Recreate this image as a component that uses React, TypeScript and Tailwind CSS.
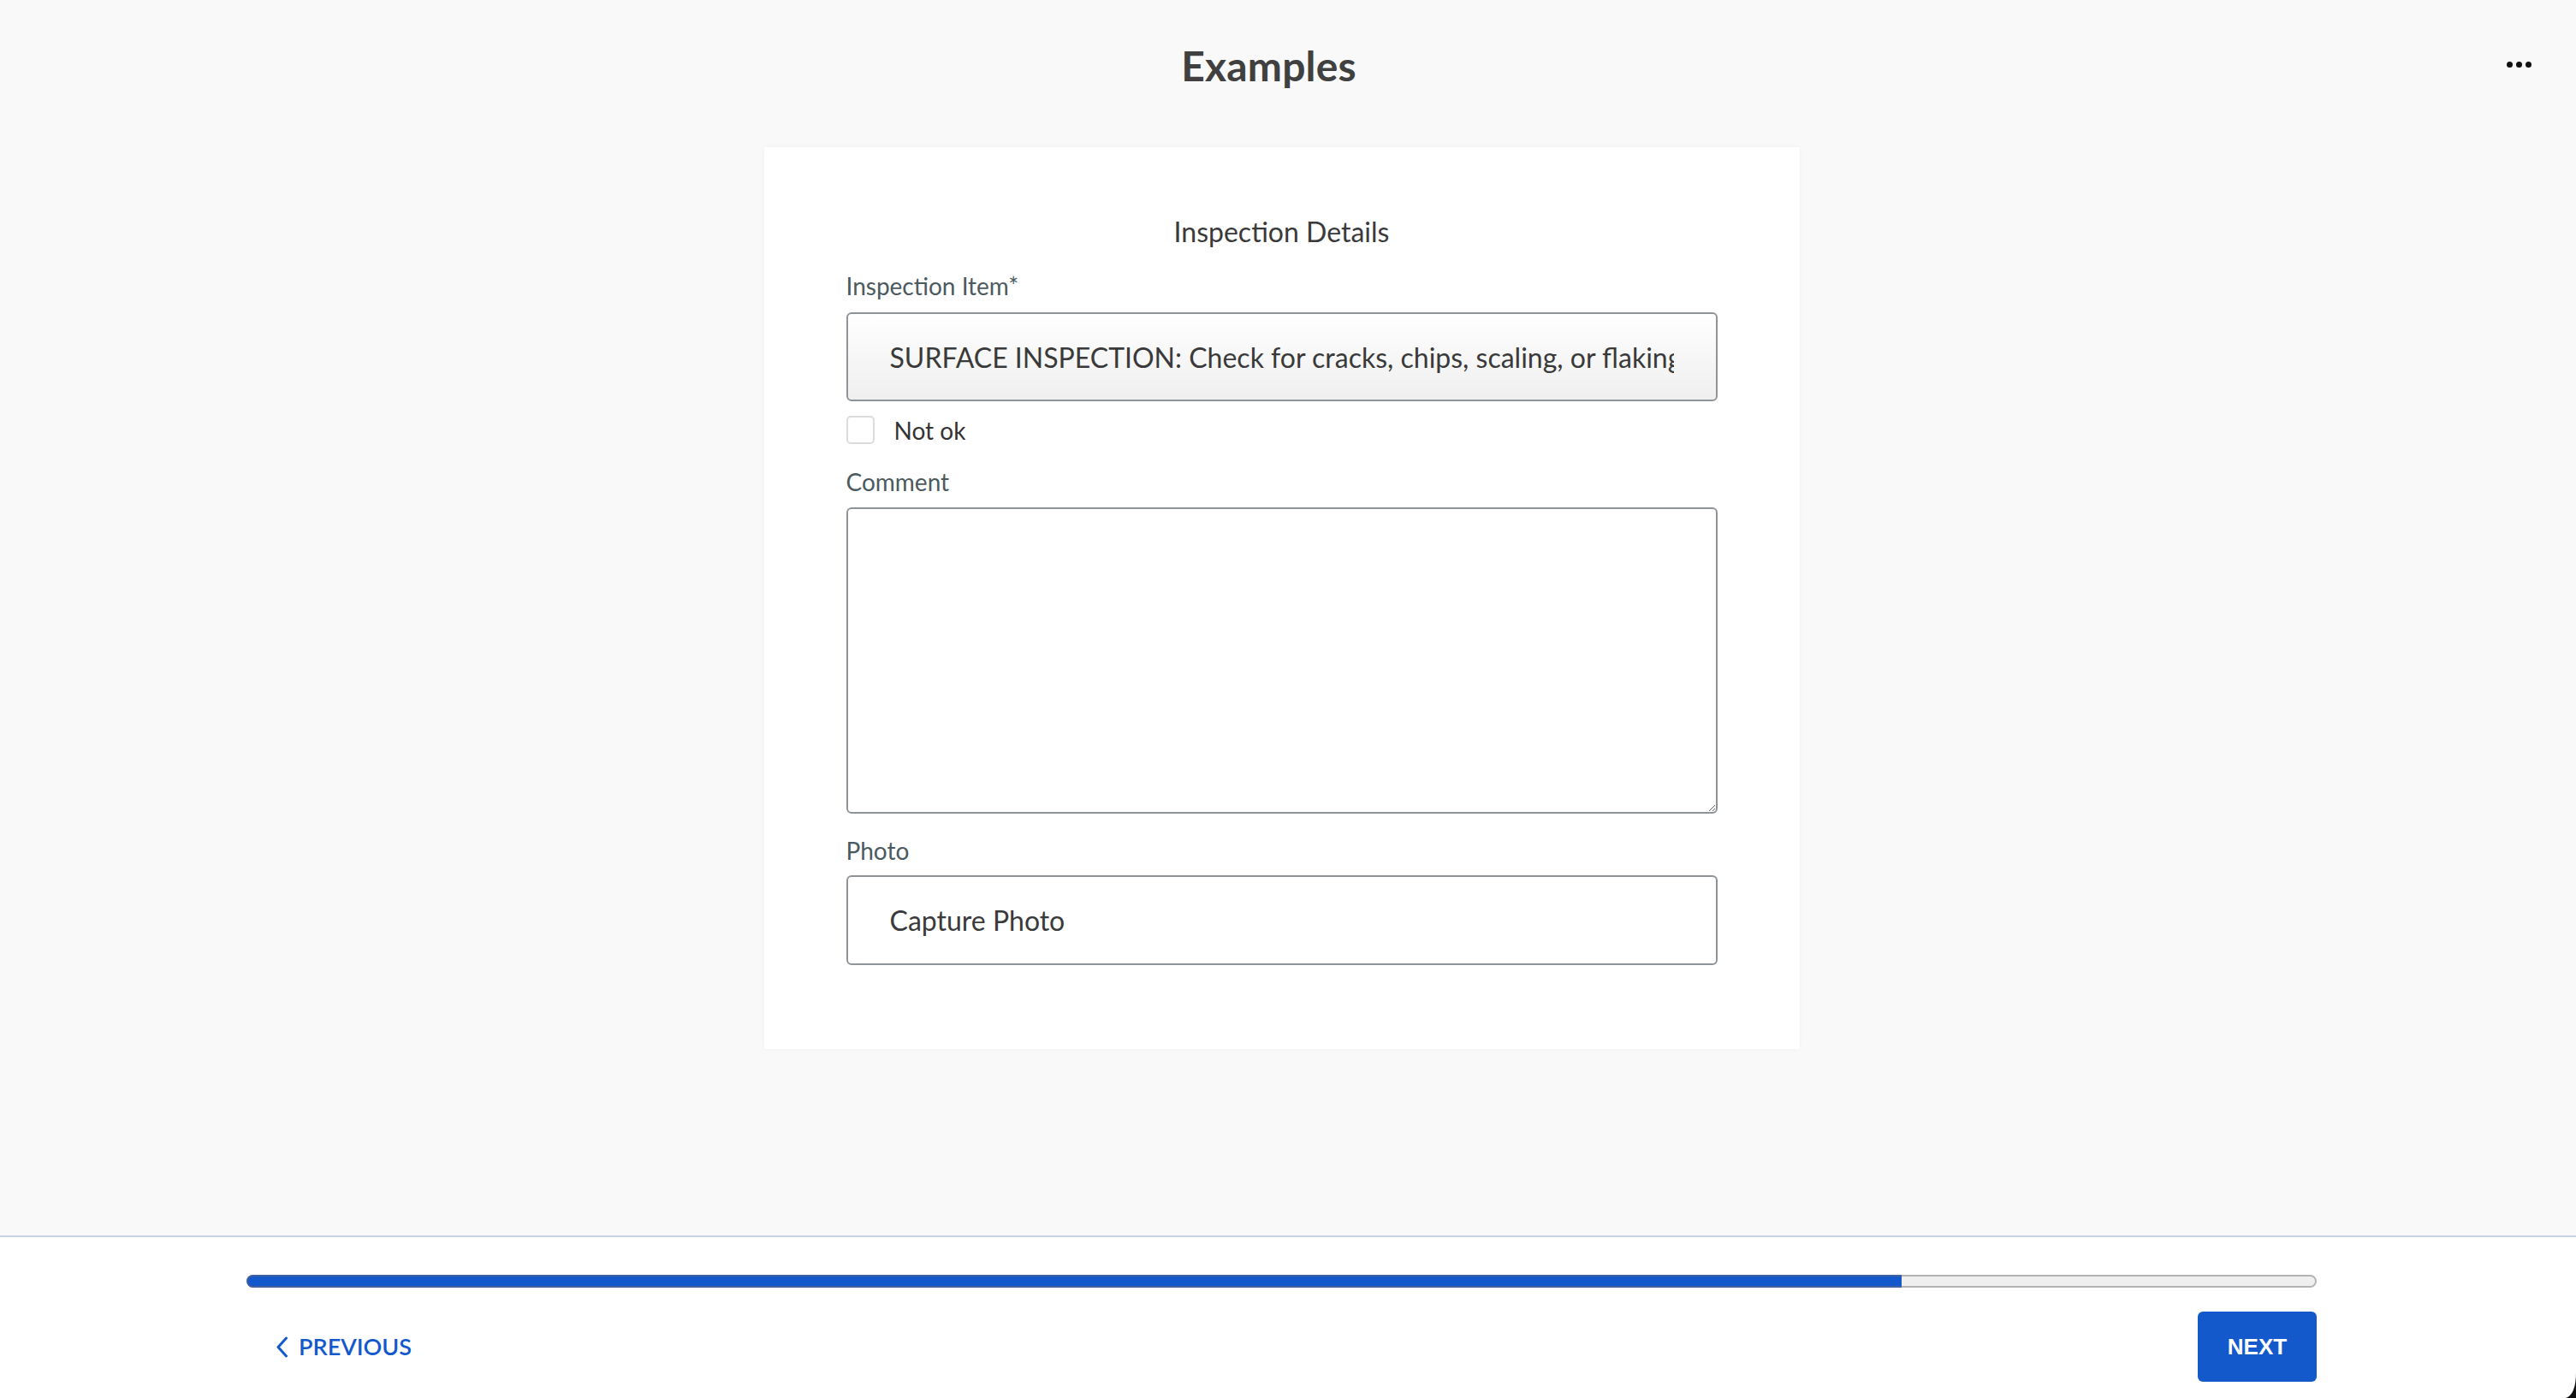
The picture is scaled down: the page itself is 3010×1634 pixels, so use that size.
import { useState } from 'react'

const font = { fontFamily: 'Lato, "Open Sans", sans-serif' }

function FieldLabel({ children }: { children: React.ReactNode }) {
  return <div className="h-8 text-[28px] leading-8 text-[#4b5a5f]">{children}</div>
}

export default function App() {
  const [notOk, setNotOk] = useState(false)
  const [comment, setComment] = useState('')
  const progress = 80

  return (
    <div className="relative flex h-[1634px] w-[3010px] flex-col overflow-hidden bg-[#f9f9f9] text-[#3a3a3a]" style={font}>
      {/* Header */}
      <div className="relative flex h-[172px] shrink-0 pr-[15px]">
        <div className="flex h-[154px] flex-1 items-center justify-center pr-[30px]">
          <h1 className="text-[48px] font-bold tracking-[0.2px] text-[#404040]">Examples</h1>
        </div>
        <button className="absolute right-[50px] top-[64px] flex h-[22px] items-center gap-[4px] px-[2px]" title="More">
          <span className="h-[7px] w-[7px] rounded-full bg-[#111]" />
          <span className="h-[7px] w-[7px] rounded-full bg-[#111]" />
          <span className="h-[7px] w-[7px] rounded-full bg-[#111]" />
        </button>
      </div>

      {/* Content */}
      <div className="flex flex-1 justify-center pr-[15px]">
        <div className="h-fit w-[1210px] bg-white px-[96px] pb-[98px] pt-[81px] shadow-[0_0_6px_rgba(0,0,0,0.04)]">
          <h2 className="h-9 text-center text-[32px] leading-9 text-[#3a3a3a]">Inspection Details</h2>

          <div className="mt-[29px]">
            <FieldLabel>Inspection Item*</FieldLabel>
            <input
              readOnly
              value="SURFACE INSPECTION: Check for cracks, chips, scaling, or flaking"
              className="mt-[15px] block h-[104px] w-full rounded-[6px] border-2 border-[#8f9499] bg-gradient-to-b from-white to-[#efefef] px-[49px] text-[32px] text-[#3a3a3a] outline-none"
              style={font}
            />
          </div>

          <label className="mt-[17px] flex h-[33px] cursor-pointer items-center">
            <input type="checkbox" checked={notOk} onChange={(e) => setNotOk(e.target.checked)} className="peer sr-only" />
            <span className="h-[33px] w-[33px] rounded-[5px] border-2 border-[#dcdcdc] bg-white peer-checked:bg-[#1459cc]" />
            <span className="ml-[23px] text-[28px] text-[#333]">Not ok</span>
          </label>

          <div className="mt-[28px]">
            <FieldLabel>Comment</FieldLabel>
            <textarea
              value={comment}
              onChange={(e) => setComment(e.target.value)}
              className="mt-[14px] block h-[358px] w-full rounded-[6px] border-2 border-[#8f9499] bg-white px-[49px] py-6 text-[32px] outline-none"
              style={font}
            />
          </div>

          <div className="mt-[27px]">
            <FieldLabel>Photo</FieldLabel>
            <button className="mt-[13px] flex h-[105px] w-full items-center rounded-[6px] border-2 border-[#8f9499] bg-white px-[49px] text-left text-[32px] text-[#3a3a3a]">
              Capture Photo
            </button>
          </div>
        </div>
      </div>

      {/* Footer */}
      <div className="flex h-[190px] shrink-0 flex-col border-t-2 border-[#c8d5e4] bg-white pl-[288px] pr-[303px]">
        <div className="relative mt-[44px] h-[15px] rounded-full border-2 border-[#b3b3b3] bg-[#efefef]">
          <div
            className="absolute -bottom-[2px] -left-[2px] -top-[2px] rounded-l-full border-2 border-r-0 border-[#40609f] bg-[#1459cc]"
            style={{ width: `calc(${progress}% + 2px)` }}
          />
        </div>
        <div className="mt-[28px] flex items-center justify-between">
          <button className="ml-[34px] flex items-center gap-[12px] text-[27px] font-semibold text-[#1459cc]">
            <svg width="15" height="25" viewBox="0 0 15 25" fill="none">
              <path d="M12.5 2 L3 12.5 L12.5 23" stroke="#1459cc" strokeWidth="3" strokeLinecap="round" strokeLinejoin="round" />
            </svg>
            PREVIOUS
          </button>
          <button
            className="h-[82px] w-[139px] rounded-[6px] bg-[#1459cc] text-[26px] font-bold text-white"
            style={{ fontFamily: '"Liberation Sans", Arial, sans-serif' }}
          >
            NEXT
          </button>
        </div>
      </div>

      {/* window corner */}
      <svg className="absolute bottom-0 right-0" width="12" height="30" viewBox="0 0 12 30">
        <path d="M12 0 Q12 26 0 30 L12 30 Z" fill="#111" />
      </svg>
    </div>
  )
}
